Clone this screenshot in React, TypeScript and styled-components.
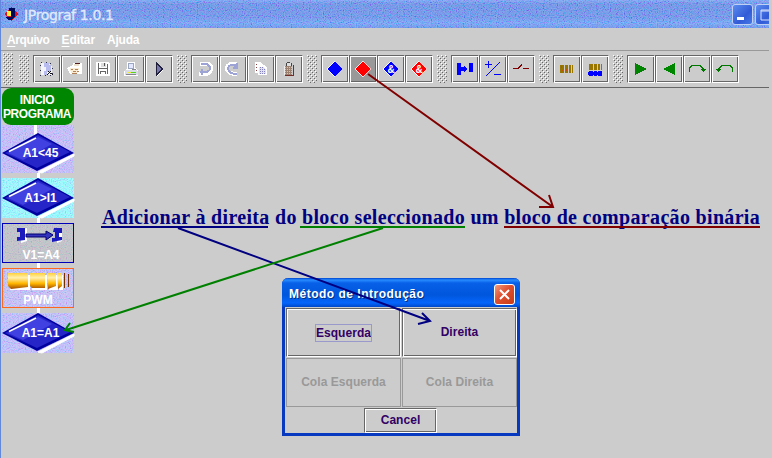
import React from "react";
import styled, { createGlobalStyle } from "styled-components";

const GlobalStyle = createGlobalStyle`
  * { box-sizing: border-box; }
  body { margin: 0; background: #ccc; overflow: hidden; font-family: "Liberation Sans", Arial, sans-serif; }
`;

const Window = styled.main`
  position: relative;
  width: 772px;
  height: 458px;
  background: #ccc;
  overflow: hidden;
`;
const Frame = styled.div`
  width: 769px;
  height: 458px;
  border-left: 1px solid #6188da;
  display: flex;
  flex-direction: column;
`;
const TitleBar = styled.header`
  position: relative;
  height: 28px;
  flex: none;
  background: linear-gradient(#7ba2f4 0, #668ce4 4px, #6890e8 18px, #70a2f6 23px, #628fe8 28px);
  display: flex;
  align-items: center;
  padding: 0 0 0 3px;
  overflow: hidden;
`;
const Grain = styled.svg`
  position: absolute;
  inset: 0;
  width: 100%;
  height: 100%;
  pointer-events: none;
`;
const AppLogo = styled.svg`
  position: relative;
  flex: none;
`;
const AppTitle = styled.h1`
  position: relative;
  margin: 2px 0 0 5px;
  flex: 1;
  font: 14px/18px "DejaVu Sans", Verdana, sans-serif;
  letter-spacing: -0.35px;
  color: #e0eafc;
  -webkit-text-stroke: 0.3px #e0eafc;
`;
const WindowButton = styled.button`
  position: relative;
  width: 21px;
  height: 21px;
  margin: 1px 2px 0 0;
  padding: 0;
  flex: none;
  border: 1px solid #c0d0f5;
  border-radius: 3px;
  background: linear-gradient(135deg, #5c8cef, #315bd7 60%, #4678e5);
`;
const WindowControls = styled.div`
  display: flex;
  width: 37px;
  overflow: hidden;
`;
const MenuBar = styled.nav`
  height: 23px;
  flex: none;
  border-bottom: 1px solid #999;
  display: flex;
  gap: 12px;
  padding: 5px 0 0 6px;
  font: bold 12px/15px "Liberation Sans", Arial, sans-serif;
  color: #fff;
`;
const MenuItem = styled.span<{ $spacing?: number }>`
  letter-spacing: ${(p) => p.$spacing ?? 0}px;
  u { text-underline-offset: 2px; text-decoration-thickness: 1px; }
`;
const ToolBar = styled.div`
  height: 37px;
  flex: none;
  border-bottom: 1px solid #666;
  display: flex;
  align-items: center;
  gap: 4px;
  padding: 0 0 0 2px;
`;
const ToolGroup = styled.div`
  display: flex;
  align-items: center;
  &:nth-child(2) { margin-left: -2px; }
`;
const GripSvg = styled.svg`
  display: block;
  width: 10px;
  margin-right: 4px;
`;
const ToolButton = styled.button<{ $pressed?: boolean }>`
  width: 28px;
  height: 28px;
  padding: 0;
  border: 1px solid;
  border-color: #666 #fff #fff #666;
  box-shadow: inset 1px 1px #fff, inset -1px -1px #666;
  background: ${(p) => (p.$pressed ? "#999" : "#ccc")};
  display: grid;
  place-items: center;
  svg { display: block; }
`;
const Workspace = styled.section`
  flex: 1;
  padding-left: 1px;
`;
const Flow = styled.div`
  width: 72px;
  display: flex;
  flex-direction: column;
`;
const StartBlock = styled.div`
  position: relative;
  height: 37px;
  border-radius: 9px;
  background: #008600;
  color: #fff;
  text-align: center;
  font: bold 12px/14px "Liberation Sans", Arial, sans-serif;
  letter-spacing: -0.4px;
  padding: 5px 2px 0 0;
  white-space: nowrap;
  overflow: hidden;
`;
const Block = styled.div<{ $bg: string; $height: number; $border?: string; $top?: number }>`
  position: relative;
  height: ${(p) => p.$height}px;
  padding-top: ${(p) => p.$top ?? 0}px;
  background: ${(p) => p.$bg};
  border: ${(p) => (p.$border ? `1px solid ${p.$border}` : "0")};
`;
const BlockArt = styled.svg`
  display: block;
  position: relative;
`;
const BlockLabel = styled.span<{ $top: number; $shift?: number }>`
  position: absolute;
  left: 0;
  right: 0;
  padding-left: ${(p) => p.$shift ?? 5}px;
  top: ${(p) => p.$top}px;
  text-align: center;
  color: #fff;
  font: bold 12px/14px "Liberation Sans", Arial, sans-serif;
`;
const Connector = styled.i<{ $h: number }>`
  display: block;
  width: 3px;
  height: ${(p) => p.$h}px;
  margin-left: 35px;
  background: #fff;
`;
const Caption = styled.p`
  position: absolute;
  left: 102px;
  top: 205px;
  margin: 0;
  color: #000080;
  font: bold 20px/24px "Liberation Serif", "Times New Roman", serif;
  letter-spacing: 0.323px;
  white-space: nowrap;
`;
const Dialog = styled.section`
  position: absolute;
  left: 282px;
  top: 278px;
  width: 238px;
  height: 158px;
  border: solid #0638c0;
  border-width: 0 3px 3px;
  border-radius: 6px 6px 0 0;
  background: #ccc;
  display: flex;
  flex-direction: column;
`;
const DialogTitle = styled.header`
  height: 29px;
  margin: 0 -3px;
  flex: none;
  border-radius: 6px 6px 0 0;
  background: linear-gradient(#0044cf 0, #288cff 2px, #0860e8 5px, #0057dd 17px, #0665fc 25px, #0048c9 29px);
  color: #fff;
  display: flex;
  align-items: center;
  justify-content: space-between;
  padding: 3px 5px 0 7px;
  font: bold 12px/16px "Liberation Sans", Arial, sans-serif;
  letter-spacing: 0.5px;
  text-shadow: 1px 1px #003080;
`;
const CloseButton = styled.button`
  width: 21px;
  height: 21px;
  padding: 0;
  border: 1px solid #fff;
  border-radius: 3px;
  background: linear-gradient(135deg, #f29a7c, #df5030 45%, #c93a14);
  display: grid;
  place-items: center;
`;
const Choices = styled.div`
  display: grid;
  grid-template: 49px 49px / 115px 115px;
  gap: 1px;
  padding: 1px 0 0 1px;
`;
const Choice = styled.button<{ $off?: boolean }>`
  padding: 0;
  border: 1px solid;
  border-color: ${(p) => (p.$off ? "#999" : "#666 #fff #fff #666")};
  box-shadow: ${(p) => (p.$off ? "none" : "inset 1px 1px #fff, inset -1px -1px #666")};
  background: #ccc;
  color: ${(p) => (p.$off ? "#999" : "#330066")};
  font: bold 12px/15px "Liberation Sans", Arial, sans-serif;
  letter-spacing: 0.05px;
`;
const Focus = styled.span`
  display: inline-block;
  outline: 1px solid #9999cc;
  line-height: 16px;
`;
const DialogFooter = styled.div`
  display: flex;
  justify-content: center;
  padding: 1px 1px 0 0;
`;
const CancelButton = styled(Choice)`
  width: 73px;
  height: 25px;
`;
const Arrows = styled.svg`
  position: absolute;
  inset: 0;
  pointer-events: none;
`;

const Grip = ({ id, h = 28 }: { id: string; h?: number }) => (
  <GripSvg width="10" height={h} shapeRendering="crispEdges">
    <defs>
      <pattern id={id} width="4" height="4" patternUnits="userSpaceOnUse">
        <path d="M0 0h1v1H0zM2 2h1v1H2z" fill="#fff" />
        <path d="M1 1h1v1H1zM3 3h1v1H3z" fill="#666" />
      </pattern>
    </defs>
    <rect width="10" height={h} fill={`url(#${id})`} />
  </GripSvg>
);

const Icon = ({ children }: { children: React.ReactNode }) => (
  <svg width="22" height="22" viewBox="0 0 22 22" shapeRendering="crispEdges">{children}</svg>
);

const diamond = (color: string, amp = false) => (
  <Icon>
    <path d="M11 3l8 8-8 8-8-8z" fill={color} stroke="#fff" strokeWidth=".8" />
    {amp && <text x="11" y="14.5" textAnchor="middle" fill="#fff" fontFamily="Liberation Sans" fontWeight="bold" fontSize="10">&amp;</text>}
  </Icon>
);

const icons = {
  select: (
    <Icon>
      <path d="M5 5h8l3 4v8H5z" fill="#f2f2fa" />
      <path d="M8 5h5v2h2v7h-4v3H8v-4h2V9H8z" fill="#b7bbed" />
      <path d="M4.5 4.5h9l3 4v9h-12z" fill="none" stroke="#303050" strokeDasharray="1 4" />
      <path d="M12 13h1v1h-1zM14 13h1v1h-1zM13 14h1v1h-1zM12 15h1v1h-1zM14 15h2v1h-2zM11 16h1v1h-1zM16 16h1v1h-1z" fill="#111" />
    </Icon>
  ),
  open: (
    <Icon>
      <path d="M3 10l6-3V5h9v11H6z" fill="#fff" />
      <path d="M6 10h9l-1 5H7z" fill="#f9ecd2" />
      <path d="M7 11.5h2m2 0h3M9 13.5h3m1 0h2M8 15.5h5" stroke="#b28158" />
      <path d="M10 6h5v2h-5z" fill="#efe2cc" /><path d="M11 5.5h5" stroke="#551d1d" />
    </Icon>
  ),
  save: (
    <Icon>
      <path d="M4 4h13l1 2v12H4z" fill="#fff" />
      <path d="M6.5 5v11M15.5 6v10M7 10.5h9M8.5 16v-3h5v3" fill="none" stroke="#666" />
      <path d="M9 5h5v4H9z" fill="#ddd" /><path d="M12.5 5v3" stroke="#555" />
    </Icon>
  ),
  print: (
    <Icon>
      <path d="M7 4h8v5l3 4v5H4v-5l3-3z" fill="#fff" />
      <path d="M8.5 5.5h5v5h-5z" fill="#e3e7ff" stroke="#9ba7c1" />
      <path d="M5 12h11l2 2v3H5z" fill="#d9dbe5" /><path d="M6 16.5h10M12 11.5h4" stroke="#85858d" />
      <path d="M11 14.5h5" stroke="#55d622" /><path d="M8 14.5h3" stroke="#f1ee2d" />
    </Icon>
  ),
  run: <Icon><path d="M8 4.5v13l6.5-6.5z" fill="#7777aa" stroke="#20203c" /><path d="M9 18l6-6" stroke="#fff" /></Icon>,
  undo: <Icon><path d="M6 6h8q4 1 3 5-1 5-7 5H5" fill="none" stroke="#fff" strokeWidth="4" /><path d="M7 6h5q4 1 4 4 0 4-6 4M8 11v6M6 14h5" fill="none" stroke="#9da4d5" strokeWidth="2" /></Icon>,
  redo: <Icon><path d="M15 6H9Q5 7 5 11q1 5 10 5" fill="none" stroke="#fff" strokeWidth="4" /><path d="M14 7H9q-3 1-3 4 1 5 9 5M11 10h4V5M13 8l2 2" fill="none" stroke="#9da4d5" strokeWidth="2" /></Icon>,
  copy: <Icon><path d="M5 4h5l3 3h2l2 3v7H8v-2H5z" fill="#fff" /><path d="M6.5 6v8" stroke="#884444" strokeDasharray="1 2" /><path d="M9 9h4l3 3v4H9z" fill="#e2e2f6" /><path d="M10 9.5h3m-3 2h5m-5 2h6m-6 2h6" stroke="#8581bd" strokeDasharray="1 1" /></Icon>,
  paste: <Icon><path d="M9 4.5h3M8.5 5v3h5V5" fill="#ddd" stroke="#444" /><path d="M7 8h7v9H7z" fill="#9d8170" /><path d="M15.5 7v10.500H7" fill="none" stroke="#712d28" /><path d="M7 9.500h7m-7 2h7m-7 2h7m-7 2h7" stroke="#c2cf9d" strokeDasharray="1 1" /><path d="M6.5 8v9" stroke="#eee" /></Icon>,
  assign: <Icon><path d="M3 5h4v4h3V8l3 3-3 3v-1H7v4H3zM15 5h4v9h-4z" fill="#00f" /></Icon>,
  math: <Icon><path d="M6 3v7M2.5 6.5h7M12 16.5h7" stroke="#00f" /><path d="M4 18L18 4" stroke="#00f" /></Icon>,
  contact: <Icon><path d="M3 10.500h5l4-4M13 10.500h6" fill="none" stroke="#800000" /></Icon>,
  pwm: <Icon><path d="M4 7h4v8H4zM9 7h3v8H9zM13 7h2v8h-2zM16 7h1v8h-1z" fill="#987400" /><path d="M5 8h1v2H5zm5 3h1v2h-1zm-4 1h1v1H6z" fill="#c74b00" /></Icon>,
  pwmNodes: <Icon><path d="M5 6h4v6H5zM10 6h3v6h-3zM14 6h2v6h-2zM17 6h1v6h-1z" fill="#987400" /><path d="M5 13h3l1 1 1-1h2l1 1 1-1h3l1 1v3l-1 1h-3l-1-1-1 1h-2l-1-1-1 1H5l-1-1v-3z" fill="#00f" /></Icon>,
  next: <Icon><path d="M5 5l12 6-12 6z" fill="#008500" /></Icon>,
  prev: <Icon><path d="M17 5L5 11l12 6z" fill="#008500" /></Icon>,
  forward: <Icon><path d="M3.5 14v-4l3-3h7l4 4M15 11.5h5M16 12.5h3M17.5 11v3" fill="none" stroke="#007800" /></Icon>,
  back: <Icon><path d="M18.5 14v-4l-3-3h-7l-4 4M2 11.5h5M3 12.5h3M4.5 11v3" fill="none" stroke="#007800" /></Icon>,
};

const groups: { items: React.ReactNode[]; pressed?: number }[] = [
  { items: [icons.select, icons.open, icons.save, icons.print, icons.run] },
  { items: [icons.undo, icons.redo, icons.copy, icons.paste] },
  { items: [diamond("#00f"), diamond("#f00"), diamond("#00f", true), diamond("#f00", true)], pressed: 1 },
  { items: [icons.assign, icons.math, icons.contact] },
  { items: [icons.pwm, icons.pwmNodes] },
  { items: [icons.next, icons.prev, icons.forward, icons.back] },
];

/* Fine colour grain used by surfaces with a dithered fill. */
const Dither = ({ id, strength = 0.2 }: { id: string; strength?: number }) => (
  <Grain aria-hidden="true">
    <filter id={id} x="0" y="0" width="100%" height="100%">
      <feTurbulence type="fractalNoise" baseFrequency=".85" numOctaves="1" seed="7" />
      <feColorMatrix values={`3 0 0 0 -1  0 3 0 0 -.9  0 0 1 0 .4  0 0 0 0 ${strength}`} />
    </filter>
    <rect width="100%" height="100%" filter={`url(#${id})`} />
  </Grain>
);

const CondBlock = ({ id, bg, label, top = 0, height }: { id: string; bg: string; label: string; top?: number; height: number }) => (
  <Block $bg={bg} $height={height} $top={top}>
    <Dither id={id} />
    <BlockArt width="72" height="40" overflow="visible">
      {top > 0 && <path d={`M33.500 -${top}v${top + 3}`} stroke="#fff" strokeWidth="3" />}
      <path d="M36 39l36-18v2L40 40z" fill="#fff" stroke="#fff" />
      <path d="M0 20L36 0l36 20-37 18z" fill="#0000a0" />
      <path d="M3 20L36 2l32 17-33 16z" fill="#2626c8" />
      <path d="M6 20L36 4l14 7-29 16z" fill="#4141e2" />
      <path d="M7 18.500L34 5" stroke="#fff" strokeWidth="1.800" />
    </BlockArt>
    <BlockLabel $top={top + 13}>{label}</BlockLabel>
  </Block>
);

export default function App() {
  return (
    <Window>
      <GlobalStyle />
      <Frame>
        <TitleBar>
          <Dither id="title-grain" strength={0.24} />
          <AppLogo width="15" height="15" viewBox="0 0 15 15" shapeRendering="crispEdges">
            <path d="M7 0l7 7-7 7-7-7z" fill="#e80c17" />
            <path d="M5 1h6v8l-3 4H4l-3-3h6V5H5z" fill="#00085c" />
            <path d="M3 4h4v5H3z" fill="#fff244" />
          </AppLogo>
          <AppTitle>JPrograf 1.0.1</AppTitle>
          <WindowControls>
            <WindowButton aria-label="Minimizar">
              <svg width="19" height="19"><path d="M4 12h7v3H4z" fill="#fff" /></svg>
            </WindowButton>
            <WindowButton aria-label="Maximizar">
              <svg width="19" height="19"><path d="M5 5h12v10H5zM5 6h12" fill="none" stroke="#dbe4fb" /></svg>
            </WindowButton>
          </WindowControls>
        </TitleBar>
        <MenuBar>
          <MenuItem $spacing={-0.4}><u>A</u>rquivo</MenuItem>
          <MenuItem $spacing={-0.1}><u>E</u>ditar</MenuItem>
          <MenuItem $spacing={-0.2}>Ajuda</MenuItem>
        </MenuBar>
        <ToolBar>
          <Grip id="bar-grip" h={32} />
          {groups.map((g, i) => (
            <ToolGroup key={i}>
              <Grip id={`grip-${i}`} />
              {g.items.map((icon, j) => <ToolButton key={j} $pressed={g.pressed === j}>{icon}</ToolButton>)}
            </ToolGroup>
          ))}
        </ToolBar>
        <Workspace>
          <Flow>
            <StartBlock>INICIO<br />PROGRAMA</StartBlock>
            <CondBlock id="cond-a" bg="#c9bdf8" label="A1<45" top={8} height={48} />
            <Connector $h={5} />
            <CondBlock id="cond-b" bg="#99ffff" label="A1>I1" height={40} />
            <Connector $h={5} />
            <Block $bg="#c4c4c4" $height={40} $border="#0000b8">
              <Dither id="assign-grain" strength={0.12} />
              <BlockArt width="70" height="38">
                <path d="M18 5v14l6-2V4zM54 5v14l5-2V4z" fill="#fff" />
                <path d="M14 4h8v12l-8 1v-4h3V8h-3zM51 4h8v5h-3v4h3v3l-10 2v-4h3V8h-2z" fill="#1919bd" />
                <path d="M23 10h20V7l7 4-7 5v-3H23z" fill="#3333bd" stroke="#00006a" />
              </BlockArt>
              <BlockLabel $top={24} $shift={6}>V1=A4</BlockLabel>
            </Block>
            <Connector $h={5} />
            <Block $bg="#c9c1f4" $height={40} $border="#ff681c">
              <Dither id="pwm-grain" />
              <BlockArt width="70" height="38">
                <defs><linearGradient id="gold" x2="0" y2="1"><stop stopColor="#ffd23b" /><stop offset=".3" stopColor="#fff0ae" /><stop offset=".65" stopColor="#ffb700" /><stop offset="1" stopColor="#9f4900" /></linearGradient></defs>
                <path d="M7 6h20v15H7zM29 6h15v15H29zM46 6h9v15h-9zM56 6h4v15h-4z" fill="#fff" />
                <path d="M5 4h20v14l-17 2-3-3zM27 4h15v15H29l-2-2zM44 4h9v13l-8 3zM54 4h5v13l-4 3z" fill="url(#gold)" />
                <path d="M61.5 4v15M65.5 5v13" stroke="#763000" />
              </BlockArt>
              <BlockLabel $top={24} $shift={0}>PWM</BlockLabel>
            </Block>
            <Connector $h={5} />
            <CondBlock id="cond-c" bg="#c5bffa" label="A1=A1" height={40} />
          </Flow>
        </Workspace>
      </Frame>
      <Caption>Adicionar à direita do bloco seleccionado um bloco de comparação binária</Caption>
      <Dialog>
        <DialogTitle>
          Método de Introdução
          <CloseButton aria-label="Fechar">
            <svg width="19" height="19"><path d="M5 5l9 9m0-9l-9 9" stroke="#fff" strokeWidth="2" /></svg>
          </CloseButton>
        </DialogTitle>
        <Choices>
          <Choice><Focus>Esquerda</Focus></Choice>
          <Choice>Direita</Choice>
          <Choice $off>Cola Esquerda</Choice>
          <Choice $off>Cola Direita</Choice>
        </Choices>
        <DialogFooter><CancelButton>Cancel</CancelButton></DialogFooter>
      </Dialog>
      <Arrows width="772" height="458" fill="none" strokeWidth="2">
        <path d="M101 227h167M178 228l252 93M422 313l8 8-12 3" stroke="#000080" />
        <path d="M300 227h165M383 228L66 330M70 323l-5 7 9 2" stroke="#008000" />
        <path d="M504 227h256M368 74l185 133M549 195l4 12h-14" stroke="#800000" />
      </Arrows>
    </Window>
  );
}
